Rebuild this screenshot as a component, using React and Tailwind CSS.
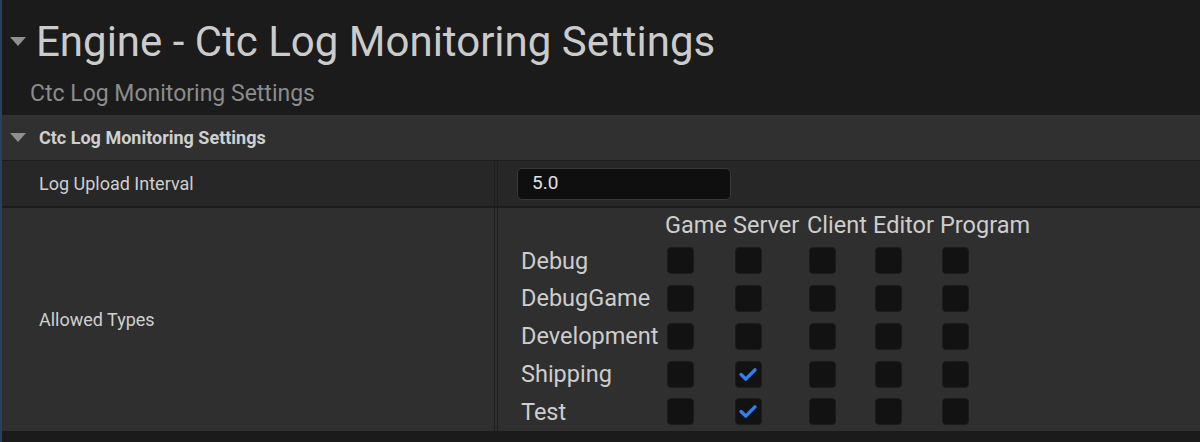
import React from "react";

const cols = ["Game", "Server", "Client", "Editor", "Program"];
const colW = ["w-[68px]", "w-[74px]", "w-[66px]", "w-[67px]", "w-[90px]"];
const rows = [
  { name: "Debug", checked: [] },
  { name: "DebugGame", checked: [] },
  { name: "Development", checked: [] },
  { name: "Shipping", checked: [1] },
  { name: "Test", checked: [1] },
];

function Caret({ className }) {
  return (
    <svg viewBox="0 0 16 10" className={className} fill="#8f8f8f">
      <path d="M0 0 L16 0 L8 9 Z" />
    </svg>
  );
}

function Box({ on }) {
  return (
    <div className="ml-[2px] w-[27px] h-[27px] rounded-[4px] bg-[#121212] border border-[#1c1c1c] flex items-center justify-center">
      {on && (
        <svg viewBox="0 0 27 27" className="w-[27px] h-[27px]">
          <path
            d="M5.5 13.5 L10.5 18.5 L20.5 8.5"
            fill="none"
            stroke="#2f7fef"
            strokeWidth="3.8"
            strokeLinecap="round"
            strokeLinejoin="round"
          />
        </svg>
      )}
    </div>
  );
}

export default function App() {
  return (
    <div
      className="w-[1200px] h-[442px] bg-[#1b1b1b] border-l-2 border-[#2c3f63] overflow-hidden flex flex-col"
      style={{ fontFamily: "Roboto, 'Noto Sans', sans-serif" }}
    >
      {/* page title */}
      <div className="h-[115px] shrink-0 flex flex-col">
        <div className="flex items-center h-[72px] pt-[12px]">
          <Caret className="w-[16px] h-[10px] ml-[8px] mr-[10px]" />
          <span className="text-[42px] text-[#cbcbcb] leading-none">
            Engine - Ctc Log Monitoring Settings
          </span>
        </div>
        <div className="pl-[28px] pt-[10px] text-[23px] text-[#8c8c8c] leading-none">
          Ctc Log Monitoring Settings
        </div>
      </div>

      {/* category header */}
      <div className="h-[46px] shrink-0 bg-[#303030] border-b border-[#1c1c1c] flex items-center">
        <Caret className="w-[16px] h-[10px] ml-[8px] mr-[13px]" />
        <span className="text-[18px] font-bold text-[#cfcfcf]">
          Ctc Log Monitoring Settings
        </span>
      </div>

      {/* Log Upload Interval */}
      <div className="h-[47px] shrink-0 bg-[#272727] border-b-2 border-[#1c1c1c] flex">
        <div className="w-[493px] shrink-0 border-r border-[#1e1e1e] flex items-center pl-[37px] text-[18px] text-[#cfcfcf]">
          Log Upload Interval
        </div>
        <div className="w-[3px] border-r border-[#1e1e1e]" />
        <div className="flex items-center pl-[19px]">
          <div className="w-[214px] h-[32px] rounded-[5px] bg-[#0f0f0f] border border-[#3a3a3a] flex items-center pl-[14px] text-[19px] text-[#e2e2e2]">
            5.0
          </div>
        </div>
      </div>

      {/* Allowed Types */}
      <div className="h-[223px] shrink-0 bg-[#2f2f2f] flex">
        <div className="w-[493px] shrink-0 border-r border-[#1e1e1e] flex items-center pl-[37px] text-[18px] text-[#cfcfcf]">
          Allowed Types
        </div>
        <div className="w-[3px] border-r border-[#1e1e1e]" />
        <div className="flex flex-col pl-[23px] pt-[5px] text-[23.5px] text-[#cdcdcd]">
          <div className="flex h-[26px] items-center">
            <div className="w-[144px]" />
            {cols.map((c, i) => (
              <div key={c} className={`${colW[i]} leading-none`}>
                {c}
              </div>
            ))}
          </div>
          <div className="h-[3px]" />
          {rows.map((r) => (
            <div key={r.name} className="flex h-[37.75px] items-center">
              <div className="w-[144px] leading-none pt-[1px]">{r.name}</div>
              {cols.map((c, i) => (
                <div key={c} className={colW[i]}>
                  <Box on={r.checked.includes(i)} />
                </div>
              ))}
            </div>
          ))}
        </div>
      </div>

      <div className="flex-1 bg-[#1b1b1b]" />
    </div>
  );
}
